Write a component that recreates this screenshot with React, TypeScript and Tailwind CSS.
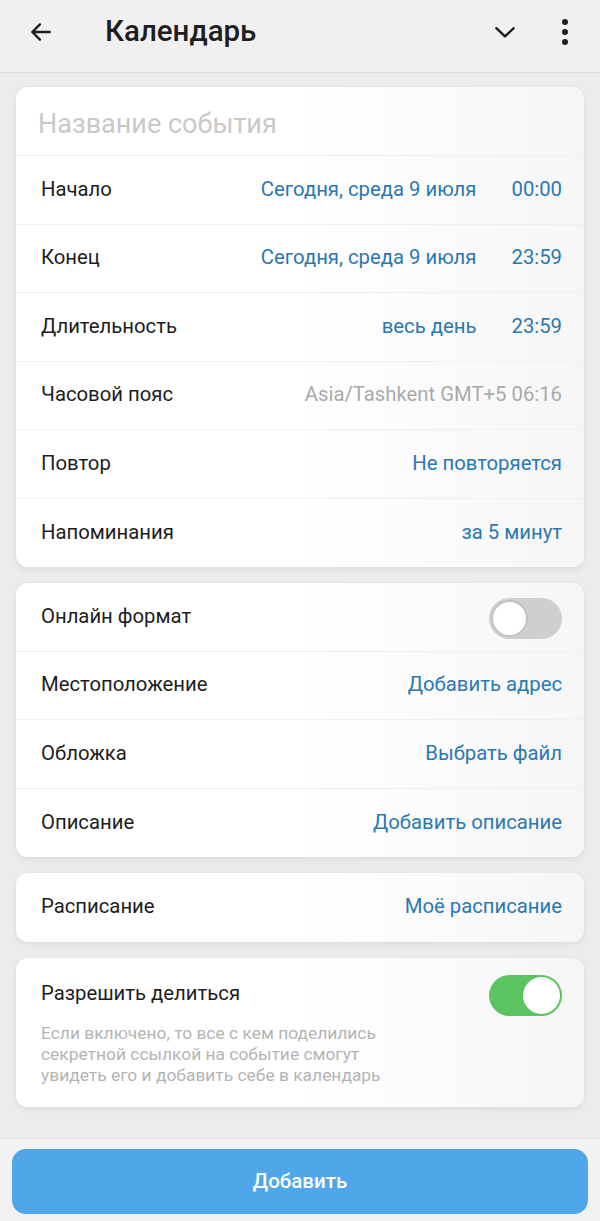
import React from 'react';

const font = { fontFamily: 'Roboto, "Noto Sans", sans-serif' };

const Row: React.FC<{ label: string; children?: React.ReactNode; last?: boolean }> = ({ label, children, last }) => (
  <div
    className={`flex items-center justify-between h-[68.5px] pl-[25px] pr-[22px] ${
      last ? '' : 'border-b border-[#f0f0f0]'
    }`}
  >
    <span className="text-[20.3px] text-[#1d1d1d] pb-[2px]">{label}</span>
    <div className="flex items-center gap-[35px] text-[20.3px] text-[#2a78b2] pb-[2px]">{children}</div>
  </div>
);

const Toggle: React.FC<{ on?: boolean }> = ({ on }) => (
  <div
    className={`w-[73px] h-[41px] rounded-full flex items-center px-[2px] ${
      on ? 'bg-[#5cc361] justify-end' : 'bg-[#cfcfcf] justify-start'
    }`}
  >
    <div
      className={`w-[37px] h-[37px] rounded-full bg-white ${on ? '' : 'border-[2px] border-[#c2c2c2]'}`}
    />
  </div>
);

const Card: React.FC<{ children: React.ReactNode }> = ({ children }) => (
  <div className="rounded-[12px] bg-gradient-to-r from-white via-white to-[#f6f6f6] shadow-[0_2px_6px_rgba(0,0,0,0.08)] overflow-hidden">
    {children}
  </div>
);

export default function App() {
  return (
    <div style={font} className="w-[600px] h-[1221px] bg-[#ececec] flex flex-col">
      <header className="h-[73px] shrink-0 bg-[#f0f0f0] border-b border-[#dadada] flex items-center pb-[9px]">
        <svg width="26" height="26" viewBox="0 0 24 24" className="ml-[28px]" fill="none" stroke="#1e1e1e" strokeWidth="2.2" strokeLinecap="round" strokeLinejoin="round">
          <path d="M20 12H4M11 5l-7 7 7 7" />
        </svg>
        <h1 className="ml-[51px] text-[29.5px] font-medium text-[#1e1e1e]">Календарь</h1>
        <svg width="26" height="26" viewBox="0 0 24 24" className="ml-auto mr-[44px]" fill="none" stroke="#1e1e1e" strokeWidth="2.2" strokeLinecap="round" strokeLinejoin="round">
          <path d="M4 8.5l8 7.5 8-7.5" />
        </svg>
        <div className="flex flex-col gap-[4px] mr-[32px] items-center">
          <span className="w-[6px] h-[6px] rounded-full bg-[#1e1e1e]" />
          <span className="w-[6px] h-[6px] rounded-full bg-[#1e1e1e]" />
          <span className="w-[6px] h-[6px] rounded-full bg-[#1e1e1e]" />
        </div>
      </header>

      <main className="flex-1 flex flex-col gap-[16px] px-[16px] pt-[14px]">
        <Card>
          <div className="h-[69px] flex items-center pl-[22px] pt-[6px] border-b border-[#f0f0f0]">
            <span className="text-[27px] text-[#c9c9c9]">Название события</span>
          </div>
          <Row label="Начало">
            <span>Сегодня, среда 9 июля</span>
            <span>00:00</span>
          </Row>
          <Row label="Конец">
            <span>Сегодня, среда 9 июля</span>
            <span>23:59</span>
          </Row>
          <Row label="Длительность">
            <span>весь день</span>
            <span>23:59</span>
          </Row>
          <Row label="Часовой пояс">
            <span className="text-[#a9a9a9]">Asia/Tashkent GMT+5 06:16</span>
          </Row>
          <Row label="Повтор">
            <span>Не повторяется</span>
          </Row>
          <Row label="Напоминания" last>
            <span>за 5 минут</span>
          </Row>
        </Card>

        <Card>
          <Row label="Онлайн формат">
            <div className="pt-[6px]">
              <Toggle />
            </div>
          </Row>
          <Row label="Местоположение">
            <span>Добавить адрес</span>
          </Row>
          <Row label="Обложка">
            <span>Выбрать файл</span>
          </Row>
          <Row label="Описание" last>
            <span>Добавить описание</span>
          </Row>
        </Card>

        <Card>
          <Row label="Расписание" last>
            <span>Моё расписание</span>
          </Row>
        </Card>

        <Card>
          <div className="pl-[25px] pr-[22px] pt-[17px] pb-[21px]">
            <div className="flex items-center justify-between">
              <span className="text-[20.3px] text-[#1d1d1d] pb-[4px]">Разрешить делиться</span>
              <Toggle on />
            </div>
            <p className="mt-[7px] text-[17.4px] leading-[21px] text-[#b4b4b4] w-[370px]">
              Если включено, то все с кем поделились секретной ссылкой на событие смогут увидеть его и добавить себе в календарь
            </p>
          </div>
        </Card>
      </main>

      <footer className="h-[83px] shrink-0 bg-[#f2f2f2] border-t border-[#e2e2e2] px-[12px] pt-[10px]">
        <button className="w-full h-[65px] rounded-[14px] bg-[#4fa6e8] text-white text-[20.5px] font-medium">
          Добавить
        </button>
      </footer>
    </div>
  );
}
